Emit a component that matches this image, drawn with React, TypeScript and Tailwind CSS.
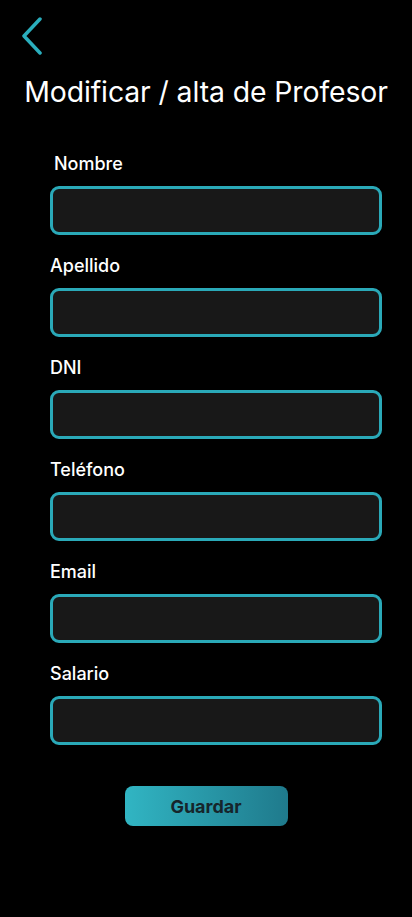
import React from "react";

const fields = ["Nombre", "Apellido", "DNI", "Teléfono", "Email", "Salario"];

export default function App() {
  return (
    <div className="min-h-[917px] w-full bg-black font-['Inter',sans-serif] text-white">
      <div className="px-[20px] pt-[17px]">
        <button className="block h-[38px] w-[26px]" aria-label="Volver">
          <svg width="26" height="38" viewBox="0 0 26 38" fill="none">
            <path d="M20 2 L4 19 L20 36" stroke="#2aaebd" strokeWidth="3.5" strokeLinecap="round" strokeLinejoin="round" />
          </svg>
        </button>
      </div>
      <h1 className="mt-[20px] text-center text-[28.4px] leading-[34px] font-normal tracking-[-0.1px]">
        Modificar / alta de Profesor
      </h1>
      <form className="mt-[44px] flex flex-col px-[50px]">
        {fields.map((f, i) => (
          <div key={f} className={i === 0 ? "" : "mt-[20px]"}>
            <label className={`block text-[18px] leading-[22px] font-medium ${i === 0 ? "pl-[4px]" : ""}`}>{f}</label>
            <input
              className="mt-[11px] block h-[49px] w-[332px] rounded-[9px] border-[3px] border-[#2aa9b8] bg-[#181818] px-3 text-white outline-none"
              type="text"
            />
          </div>
        ))}
        <div className="mt-[41px] flex justify-center">
          <button
            type="button"
            className="h-[40px] w-[163px] rounded-[8px] bg-gradient-to-r from-[#31b5c3] to-[#1f7a8c] text-[18px] font-bold text-[#16252b]"
          >
            Guardar
          </button>
        </div>
      </form>
    </div>
  );
}
